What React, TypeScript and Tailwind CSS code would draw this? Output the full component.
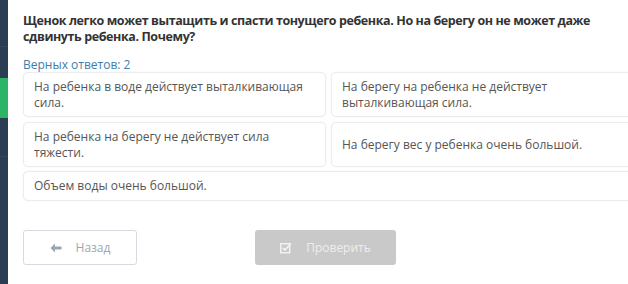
import React from "react";

function Card({ children, className = "" }: { children: React.ReactNode; className?: string }) {
  return (
    <div
      className={
        "flex items-center rounded-[5px] border border-[#ececec] bg-white px-[10px] text-[12px] leading-[16px] text-[#555] shadow-[0_0_2px_rgba(0,0,0,0.06)] " +
        className
      }
    >
      {children}
    </div>
  );
}

export default function App() {
  return (
    <div className="flex h-[284px] w-[628px] overflow-hidden bg-white" style={{ fontFamily: '"Open Sans", "Noto Sans", sans-serif' }}>
      <div className="flex w-[8px] shrink-0 flex-col bg-[#2a3d52]">
        <div className="h-[47px] border-b border-[#34495f]" />
        <div className="h-[31px]" />
        <div className="h-[40px] bg-[#2eb466]" />
        <div className="h-[39px] border-b border-[#34495f]" />
        <div className="flex-1" />
      </div>
      <div className="flex flex-1 flex-col pl-[15px]">
        <div className="whitespace-nowrap pt-[13px] text-[12.5px] font-bold leading-[16px] text-[#333] tracking-[-0.4px]">
          Щенок легко может вытащить и спасти тонущего ребенка. Но на берегу он не может даже
          <br />
          сдвинуть ребенка. Почему?
        </div>
        <div className="mt-[13px] text-[12px] leading-[14px] text-[#3d7ea6]">Верных ответов: 2</div>
        <div className="mr-[-12px] grid grid-cols-[303px_1fr] gap-x-[5px] gap-y-[5px]">
          <Card className="h-[45px]">
            <span>
              На ребенка в воде действует выталкивающая
              <br />
              сила.
            </span>
          </Card>
          <Card className="h-[45px]">
            <span>
              На берегу на ребенка не действует
              <br />
              выталкивающая сила.
            </span>
          </Card>
          <Card className="h-[45px]">
            <span>
              На ребенка на берегу не действует сила
              <br />
              тяжести.
            </span>
          </Card>
          <Card className="h-[45px]">
            <span>На берегу вес у ребенка очень большой.</span>
          </Card>
          <Card className="col-span-2 mt-[-1px] h-[30px]">
            <span>Объем воды очень большой.</span>
          </Card>
        </div>
        <div className="mt-[29px] flex items-center">
          <button className="flex h-[35px] w-[114px] items-center justify-center gap-[14px] rounded-[3px] border border-[#d5dbe0] bg-white text-[12px] text-[#9aa7b3]">
            <svg width="12" height="10" viewBox="0 0 12 10">
              <path d="M5 0.5 L0.5 5 L5 9.5 L5 6.5 L11.5 6.5 L11.5 3.5 L5 3.5 Z" fill="#9aa7b3" />
            </svg>
            <span>Назад</span>
          </button>
          <button className="ml-[118px] flex h-[35px] w-[141px] items-center justify-center gap-[14px] rounded-[3px] bg-[#c9c9c9] text-[12px] text-[#eeeeee]">
            <svg width="12" height="12" viewBox="0 0 12 12">
              <rect x="0.75" y="1.75" width="9" height="9" fill="none" stroke="#f2f2f2" strokeWidth="1.5" />
              <path d="M3 6 L5 8 L11 1.5" fill="none" stroke="#f2f2f2" strokeWidth="1.8" />
            </svg>
            <span>Проверить</span>
          </button>
        </div>
      </div>
    </div>
  );
}
